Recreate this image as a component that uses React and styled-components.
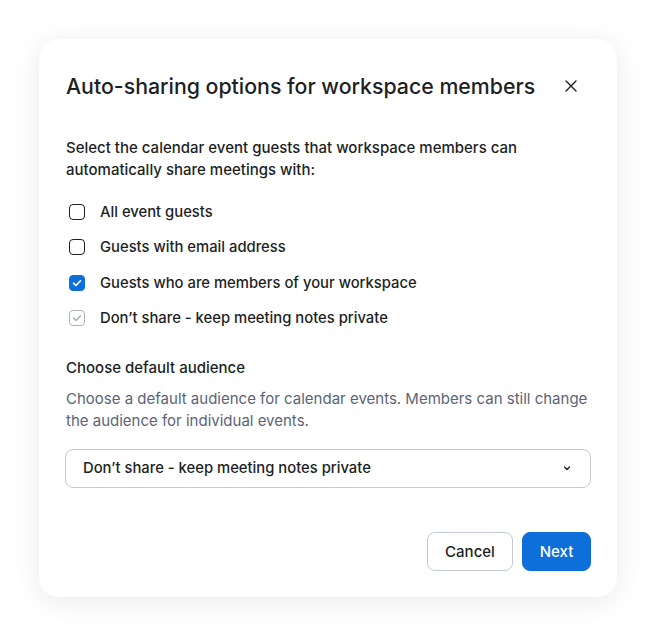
import styled, { createGlobalStyle } from "styled-components";

const GlobalStyle = createGlobalStyle`
  html, body {
    margin: 0;
    padding: 0;
    background: #ffffff;
  }
  body {
    font-family: Inter, "Noto Sans", sans-serif;
    color: #1d1f25;
    -webkit-font-smoothing: antialiased;
  }
`;

const Page = styled.div`
  width: 656px;
  height: 637px;
  padding: 39px 39px 0 39px;
  box-sizing: border-box;
`;

const Card = styled.div`
  width: 578px;
  height: 558px;
  box-sizing: border-box;
  background: #ffffff;
  border-radius: 20px;
  box-shadow: 0 4px 28px rgba(0, 0, 0, 0.09);
  padding: 29px 26px 26px 26px;
  display: flex;
  flex-direction: column;
`;

const Header = styled.div`
  display: flex;
  align-items: center;
  justify-content: space-between;
  height: 35px;
`;

const Title = styled.h2`
  margin: 0 0 0 1px;
  font-size: 21.3px;
  font-weight: 500;
  color: #1d1f25;
`;

const CloseButton = styled.button`
  border: none;
  background: none;
  padding: 0;
  width: 24px;
  height: 24px;
  margin-right: 8px;
  display: flex;
  align-items: center;
  justify-content: center;
  color: #1d1f25;
  cursor: pointer;
`;

const Intro = styled.p`
  margin: 34px 0 0 1px;
  font-size: 15px;
  line-height: 22px;
  font-weight: 500;
  color: #1d1f25;
`;

const OptionList = styled.div`
  display: flex;
  flex-direction: column;
  gap: 13.3px;
  margin-top: 20px;
`;

const Option = styled.label`
  display: flex;
  align-items: center;
  gap: 15px;
  height: 22px;
  padding-left: 4px;
  font-size: 14.8px;
  font-weight: 500;
  color: #1d1f25;
`;

const Box = styled.span`
  width: 16px;
  height: 16px;
  box-sizing: border-box;
  border-radius: 4px;
  display: flex;
  align-items: center;
  justify-content: center;
  border: 1.5px solid
    ${(p) => (p.$state === "on" ? "#0e6fdb" : p.$state === "dim" ? "#aab2c0" : "#1d1f25")};
  background: ${(p) => (p.$state === "on" ? "#0e6fdb" : "#ffffff")};
  color: ${(p) => (p.$state === "on" ? "#ffffff" : "#aab2c0")};
`;

const SectionTitle = styled.h3`
  margin: 28px 0 0 1px;
  font-size: 15px;
  line-height: 22px;
  font-weight: 500;
  color: #1d1f25;
`;

const Hint = styled.p`
  margin: 9px 0 0 1px;
  font-size: 15px;
  line-height: 22px;
  font-weight: 400;
  color: #5b6478;
`;

const Select = styled.div`
  margin-top: 17px;
  height: 39px;
  box-sizing: border-box;
  border: 1px solid #c3c9d4;
  border-radius: 8px;
  display: flex;
  align-items: center;
  justify-content: space-between;
  padding: 0 18px 0 17px;
  font-size: 14.8px;
  font-weight: 500;
  color: #1d1f25;
`;

const Footer = styled.div`
  margin-top: auto;
  display: flex;
  justify-content: flex-end;
  gap: 9px;
`;

const Button = styled.button`
  height: 39px;
  box-sizing: border-box;
  width: ${(p) => (p.$primary ? "69px" : "86px")};
  padding: 0;
  border-radius: 8px;
  font-family: inherit;
  font-size: 15px;
  font-weight: 500;
  cursor: pointer;
  border: 1px solid ${(p) => (p.$primary ? "#0e6fdb" : "#c3c9d4")};
  background: ${(p) => (p.$primary ? "#0e6fdb" : "#ffffff")};
  color: ${(p) => (p.$primary ? "#ffffff" : "#1d1f25")};
`;

const Check = () => (
  <svg width="10" height="10" viewBox="0 0 10 10" fill="none">
    <path d="M1.5 5.2 L4 7.5 L8.5 2.8" stroke="currentColor" strokeWidth="1.6" strokeLinecap="round" strokeLinejoin="round" />
  </svg>
);

const options = [
  { label: "All event guests", state: "off" },
  { label: "Guests with email address", state: "off" },
  { label: "Guests who are members of your workspace", state: "on" },
  { label: "Don’t share - keep meeting notes private", state: "dim" },
];

export default function App() {
  return (
    <>
      <GlobalStyle />
      <Page>
        <Card>
          <Header>
            <Title>Auto-sharing options for workspace members</Title>
            <CloseButton aria-label="Close">
              <svg width="12" height="12" viewBox="0 0 12 12" fill="none">
                <path d="M1 1 L11 11 M11 1 L1 11" stroke="currentColor" strokeWidth="1.4" strokeLinecap="round" />
              </svg>
            </CloseButton>
          </Header>
          <Intro>
            Select the calendar event guests that workspace members can
            <br />
            automatically share meetings with:
          </Intro>
          <OptionList>
            {options.map((o) => (
              <Option key={o.label}>
                <Box $state={o.state}>{o.state !== "off" && <Check />}</Box>
                {o.label}
              </Option>
            ))}
          </OptionList>
          <SectionTitle>Choose default audience</SectionTitle>
          <Hint>
            Choose a default audience for calendar events. Members can still change
            <br />
            the audience for individual events.
          </Hint>
          <Select>
            <span>Don’t share - keep meeting notes private</span>
            <svg width="10" height="10" viewBox="0 0 10 10" fill="none">
              <path d="M2.5 4 L5 6.5 L7.5 4" stroke="#1d1f25" strokeWidth="1.4" strokeLinecap="round" strokeLinejoin="round" />
            </svg>
          </Select>
          <Footer>
            <Button>Cancel</Button>
            <Button $primary>Next</Button>
          </Footer>
        </Card>
      </Page>
    </>
  );
}
